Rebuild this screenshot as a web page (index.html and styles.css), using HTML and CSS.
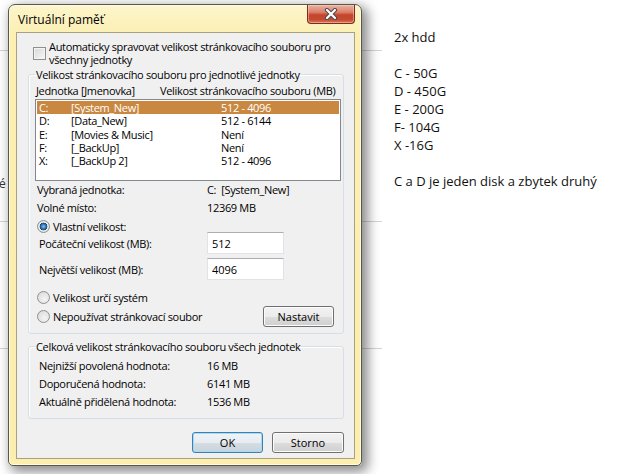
FILE: index.html
```html
<!DOCTYPE html>
<html lang="cs">
<head>
    <meta charset="UTF-8">
    <title>Virtuální paměť</title>
    <link rel="stylesheet" href="styles.css">
</head>
<body>
    <div class="screen">
        <div class="backdrop">
            <div class="bg-line top"></div>
            <div class="bg-word">é</div>
            <div class="bg-line mid"></div>
            <div class="bg-line low"></div>

            <div class="window">
                <div class="titlebar">
                    <span class="title">Virtuální paměť</span>
                    <button class="close" type="button">
                        <svg width="14" height="12" viewBox="0 0 14 12">
                            <path d="M3 2 L11 10 M11 2 L3 10" stroke="#4a4a52" stroke-width="4.2" stroke-linecap="round"/>
                            <path d="M3 2 L11 10 M11 2 L3 10" stroke="#ffffff" stroke-width="2.2" stroke-linecap="round"/>
                        </svg>
                    </button>
                </div>

                <div class="client">
                    <label class="check-row">
                        <span class="checkbox"></span>
                        <span class="check-text">Automaticky spravovat velikost stránkovacího souboru pro<br>všechny jednotky</span>
                    </label>

                    <fieldset class="group drives">
                        <legend>Velikost stránkovacího souboru pro jednotlivé jednotky</legend>
                        <div class="col-heads">
                            <span>Jednotka [Jmenovka]</span>
                            <span>Velikost stránkovacího souboru (MB)</span>
                        </div>
                        <ul class="listbox">
                            <li class="selected"><span>C:</span><span>[System_New]</span><span>512 - 4096</span></li>
                            <li><span>D:</span><span>[Data_New]</span><span>512 - 6144</span></li>
                            <li><span>E:</span><span>[Movies &amp; Music]</span><span>Není</span></li>
                            <li><span>F:</span><span>[_BackUp]</span><span>Není</span></li>
                            <li><span>X:</span><span>[_BackUp 2]</span><span>512 - 4096</span></li>
                        </ul>

                        <div class="info-row"><span>Vybraná jednotka:</span><span>C:&nbsp;&nbsp;[System_New]</span></div>
                        <div class="info-row"><span>Volné místo:</span><span>12369 MB</span></div>

                        <div class="radio-row first"><span class="radio checked"></span>Vlastní velikost:</div>
                        <div class="input-row"><span>Počáteční velikost (MB):</span><input type="text" value="512"></div>
                        <div class="input-row second"><span>Největší velikost (MB):</span><input type="text" value="4096"></div>

                        <div class="radio-row system"><span class="radio"></span>Velikost určí systém</div>
                        <div class="radio-row last">
                            <span class="radio"></span>Nepoužívat stránkovací soubor
                            <button class="btn set" type="button">Nastavit</button>
                        </div>
                    </fieldset>

                    <fieldset class="group totals">
                        <legend>Celková velikost stránkovacího souboru všech jednotek</legend>
                        <div class="total-row"><span>Nejnižší povolená hodnota:</span><span>16 MB</span></div>
                        <div class="total-row"><span>Doporučená hodnota:</span><span>6141 MB</span></div>
                        <div class="total-row"><span>Aktuálně přidělená hodnota:</span><span>1536 MB</span></div>
                    </fieldset>

                    <div class="actions">
                        <button class="btn ok" type="button">OK</button>
                        <button class="btn cancel" type="button">Storno</button>
                    </div>
                </div>
            </div>
        </div>

        <div class="notes">
            <p>2x hdd</p>
            <p>&nbsp;</p>
            <p>C - 50G</p>
            <p>D - 450G</p>
            <p>E - 200G</p>
            <p>F- 104G</p>
            <p>X -16G</p>
            <p>&nbsp;</p>
            <p>C a D je jeden disk a zbytek druhý</p>
        </div>
    </div>
</body>
</html>
```

FILE: styles.css
```css
body {
    margin: 0;
    background: #fff;
    font-family: "Open Sans", "Noto Sans", sans-serif;
    color: #000;
}
.screen {
    display: flex;
    width: 644px;
    height: 474px;
    overflow: hidden;
}

/* background behind the dialog */
.backdrop {
    position: relative;
    width: 382px;
    flex-shrink: 0;
}
.bg-line {
    border-bottom: 1px solid #d4d4d4;
}
.bg-line.top {
    height: 50px;
}
.bg-word {
    margin-top: 126px;
    margin-left: -1px;
    font-size: 12px;
    line-height: 13px;
    color: #333;
}
.bg-line.mid {
    height: 31px;
}
.bg-line.low {
    height: 126px;
}

/* window */
.window {
    position: absolute;
    left: 8px;
    top: 4px;
    width: 354px;
    height: 462px;
    box-sizing: border-box;
    padding: 0 6px 6px 7px;
    border: 1px solid #58574a;
    border-radius: 7px 7px 5px 5px;
    background: linear-gradient(#fdf5cc, #fbefb2 30px, #fbeeae);
    box-shadow: 4px 4px 12px 2px rgba(0, 0, 0, 0.45), inset 0 0 0 1px #fffbe4;
    display: flex;
    flex-direction: column;
}
.titlebar {
    height: 27px;
    display: flex;
    align-items: flex-start;
    justify-content: space-between;
}
.title {
    font-size: 12px;
    line-height: 16px;
    margin-top: 7px;
    margin-left: 2px;
    color: #000;
}
.close {
    width: 48px;
    height: 19px;
    padding: 0;
    border: 1px solid #7b2c1c;
    border-top: none;
    border-radius: 0 0 4px 4px;
    background: linear-gradient(#eab3a3, #dc806a 40%, #c6452c 55%, #c34a30 80%, #d97757);
    display: flex;
    align-items: center;
    justify-content: center;
    box-shadow: inset 0 0 0 1px rgba(255, 220, 200, 0.45);
}
.close svg {
    display: block;
}

.client {
    flex: 1;
    box-sizing: border-box;
    border: 1px solid #a8a283;
    background: #f0f0f0;
    padding: 7px 10px 0 11px;
    font-size: 11px;
    letter-spacing: -0.33px;
    line-height: 13px;
    white-space: nowrap;
}

/* auto checkbox */
.check-row {
    display: flex;
    align-items: center;
    gap: 3px;
    margin-left: 5px;
}
.checkbox {
    width: 13px;
    height: 13px;
    box-sizing: border-box;
    border: 1px solid #8e8f8f;
    background: linear-gradient(135deg, #d8d8d8, #f7f7f7);
    box-shadow: inset 0 0 0 1px #f4f4f4;
    flex-shrink: 0;
}

/* group boxes */
.group {
    margin: 2px 0 0;
    border: 1px solid #d5dfe5;
    border-radius: 3px;
    padding: 3px 2px 6px 6px;
    box-shadow: inset 1px 1px 0 #fff;
    min-width: 0;
}
.group legend {
    padding: 0 1px;
    line-height: 13px;
}
.group.totals {
    margin-top: 6px;
    padding: 4px 2px 7px 6px;
}

.col-heads {
    display: grid;
    grid-template-columns: 124px 1fr;
    padding-left: 1px;
}

.listbox {
    list-style: none;
    margin: 2px 0 0;
    padding: 1px;
    height: 82px;
    box-sizing: border-box;
    border: 1px solid #828790;
    background: #fff;
}
.listbox li {
    display: grid;
    grid-template-columns: 32px 150px 1fr;
    padding-left: 2px;
    height: 13px;
    margin-bottom: 0.35px;
    line-height: 13px;
}
.listbox li.selected {
    background: #c9873f;
    color: #fff;
}

.info-row {
    display: grid;
    grid-template-columns: 170px 1fr;
    padding-left: 2px;
    line-height: 18px;
}

.radio-row {
    display: flex;
    align-items: center;
    gap: 3px;
    margin-left: 2px;
    height: 12px;
}
.radio-row.first {
    margin-top: 3px;
}
.radio-row.system {
    margin-top: 10px;
    height: 14px;
}
.radio-row.last {
    margin-top: 2px;
    height: 21px;
}
.radio {
    width: 13px;
    height: 13px;
    box-sizing: border-box;
    border-radius: 50%;
    border: 1px solid #8e8f8f;
    background: radial-gradient(circle at 60% 65%, #f4f4f4, #d6d6d6);
    flex-shrink: 0;
}
.radio.checked {
    background: radial-gradient(circle at 50% 50%, #7fc0ec 0, #2a72b6 2.5px, #17466f 3.6px, #f2f2f2 4.2px, #d6d6d6 6px);
}

.input-row {
    display: grid;
    grid-template-columns: 168px 77px;
    align-items: center;
    padding-left: 4px;
    height: 22px;
}
.input-row.second {
    margin-top: 4px;
}
.input-row input {
    width: 77px;
    height: 22px;
    box-sizing: border-box;
    margin: 0;
    padding: 0 0 0 4px;
    border: 1px solid #e2e3ea;
    border-top-color: #abadb3;
    background: #fff;
    font: inherit;
    color: #000;
}

.total-row {
    display: grid;
    grid-template-columns: 168px 1fr;
    padding-left: 4px;
    line-height: 18px;
}

/* buttons */
.btn {
    height: 21px;
    box-sizing: border-box;
    border: 1px solid #707070;
    border-radius: 3px;
    background: linear-gradient(#f2f2f2, #ebebeb 50%, #dddddd 50%, #cfcfcf);
    box-shadow: inset 0 0 0 1px #fcfcfc;
    font: inherit;
    color: #000;
    padding: 0;
}
.btn.set {
    width: 71px;
    margin-left: auto;
    margin-right: 7px;
}
.actions {
    display: flex;
    justify-content: flex-end;
    gap: 9px;
    margin-top: 13px;
}
.btn.ok {
    width: 71px;
    border-color: #3c7fb1;
    box-shadow: inset 0 0 0 1px #a6daf5;
    background: linear-gradient(#f0f4f7, #e6ecf0 50%, #d6dee4 50%, #c9d3da);
}
.btn.cancel {
    width: 72px;
}

/* notes on the right */
.notes {
    padding-top: 28px;
    padding-left: 12px;
    font-size: 13px;
    line-height: 18px;
    color: #111;
}
.notes p {
    margin: 0;
    white-space: nowrap;
}
```
